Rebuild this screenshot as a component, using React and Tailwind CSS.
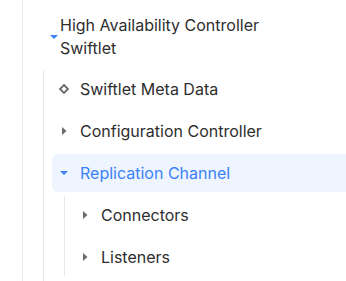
import React from "react"

function CaretRight() {
  return (
    <svg width="12" height="12" viewBox="0 0 12 12" className="shrink-0">
      <path d="M4 2 L8.5 6 L4 10 Z" fill="#6b6b6b" />
    </svg>
  )
}

function CaretDown({ color = "#3b82f6" }) {
  return (
    <svg width="12" height="12" viewBox="0 0 12 12" className="shrink-0">
      <path d="M2 4 L10 4 L6 8 Z" fill={color} />
    </svg>
  )
}

function Diamond() {
  return (
    <svg width="12" height="12" viewBox="0 0 12 12" className="shrink-0">
      <path d="M6 2 L10 6 L6 10 L2 6 Z" fill="none" stroke="#6b6b6b" strokeWidth="1.8" />
    </svg>
  )
}

function Row({ icon, label, active }) {
  return (
    <div
      className={
        "ml-2 flex h-[38px] items-center gap-[10px] pl-[6px] text-[16px] " +
        (active ? "rounded-l-md bg-[#eef5ff] text-[#3b82f6]" : "text-[#2e2e2e]")
      }
    >
      {icon}
      <span>{label}</span>
    </div>
  )
}

export default function App() {
  return (
    <div
      className="h-[281px] w-[346px] overflow-hidden bg-white"
      style={{ fontFamily: "Inter, 'Noto Sans', sans-serif" }}
    >
      <div className="ml-[22px] h-full border-l border-[#e8e8e8]">
        <div className="flex items-center pl-[25px] pt-[14px] pb-[10px]">
          <CaretDown />
          <span className="w-[230px] text-[16px] leading-[23px] text-[#2e2e2e]">
            High Availability Controller Swiftlet
          </span>
        </div>
        <div className="ml-5 flex h-full flex-col gap-1 border-l border-[#e8e8e8]">
          <Row icon={<Diamond />} label="Swiftlet Meta Data" />
          <Row icon={<CaretRight />} label="Configuration Controller" />
          <div className="flex flex-col">
            <Row icon={<CaretDown />} label="Replication Channel" active />
            <div className="ml-5 mt-1 flex flex-col gap-1 border-l border-[#e8e8e8]">
              <Row icon={<CaretRight />} label="Connectors" />
              <Row icon={<CaretRight />} label="Listeners" />
            </div>
          </div>
        </div>
      </div>
    </div>
  )
}
